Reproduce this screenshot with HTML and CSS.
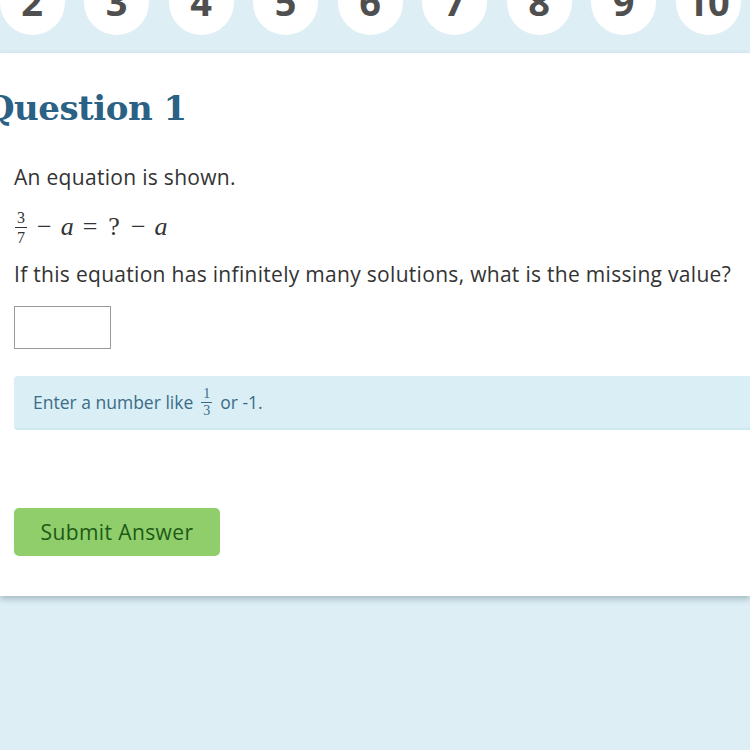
FILE: index.html
```html
<!DOCTYPE html>
<html>
<head>
<meta charset="utf-8">
<link rel="stylesheet" href="styles.css">
</head>
<body>
<nav class="nav">
  <div class="nav-row">
    <span class="dot">1</span>
    <span class="dot">2</span>
    <span class="dot">3</span>
    <span class="dot">4</span>
    <span class="dot">5</span>
    <span class="dot">6</span>
    <span class="dot">7</span>
    <span class="dot">8</span>
    <span class="dot">9</span>
    <span class="dot">10</span>
  </div>
</nav>
<main class="card">
  <h1 class="title">Question 1</h1>
  <p class="text first">An equation is shown.</p>
  <div class="eq">
    <span class="frac"><span class="num">3</span><span class="den">7</span></span>
    <span class="op">−</span><i class="var">a</i><span class="op">=</span><span class="q">?</span><span class="op">−</span><i class="var">a</i>
  </div>
  <p class="text">If this equation has infinitely many solutions, what is the missing value?</p>
  <div class="answer"></div>
  <div class="hint">Enter a number like <span class="frac small"><span class="num">1</span><span class="den">3</span></span> or -1.</div>
  <button class="submit">Submit Answer</button>
</main>
</body>
</html>
```

FILE: styles.css
```css
html, body {
  margin: 0;
  padding: 0;
}
body {
  background: #ddeef5;
  width: 750px;
  height: 750px;
  overflow: hidden;
  font-family: "Open Sans", "Liberation Sans", sans-serif;
}
.nav {
  height: 53px;
  overflow: hidden;
}
.nav-row {
  display: flex;
  gap: 19.5px;
  margin-left: -85px;
  margin-top: -30px;
}
.dot {
  flex: 0 0 65px;
  height: 65px;
  border-radius: 50%;
  background: #fff;
  display: flex;
  align-items: center;
  justify-content: center;
  color: #4f4f4f;
  font-weight: 700;
  font-size: 38px;
  font-family: "Open Sans", sans-serif;
  line-height: 1;
  padding-bottom: 4px;
  box-sizing: border-box;
}
.card {
  background: #fff;
  height: 543px;
  box-shadow: 0 3px 6px rgba(60, 90, 100, 0.35);
  padding: 0 0 0 14px;
  box-sizing: border-box;
  display: flex;
  flex-direction: column;
  align-items: flex-start;
  overflow: hidden;
}
.title {
  margin: 31px 0 0 -29px;
  font-family: "DejaVu Serif", serif;
  font-weight: 700;
  font-size: 34px;
  line-height: 48px;
  color: #2b6184;
  letter-spacing: -0.5px;
}
.text {
  margin: 0;
  font-size: 21px;
  letter-spacing: 0.3px;
  line-height: 28px;
  color: #333;
  white-space: nowrap;
}
.text.first {
  margin-top: 31px;
}
.eq {
  margin-top: 16px;
  height: 40px;
  display: flex;
  align-items: center;
  font-family: "Liberation Serif", serif;
  font-size: 26px;
  color: #333;
  margin-bottom: 13px;
}
.frac {
  display: inline-flex;
  flex-direction: column;
  align-items: center;
  font-family: "Liberation Serif", serif;
  font-size: 16px;
  line-height: 17px;
  padding: 0 1px;
}
.frac .num {
  border-bottom: 1px solid currentColor;
  padding: 0 2px 1px;
}
.frac .den {
  padding-top: 1px;
}
.op {
  margin: 0 9px;
}
.var {
  font-style: italic;
}
.q {
  margin: 0 2px;
}
.answer {
  margin-top: 18px;
  width: 97px;
  height: 43px;
  box-sizing: border-box;
  border: 1px solid #9a9a9a;
}
.hint {
  margin-top: 27px;
  align-self: stretch;
  margin-right: -10px;
  height: 54px;
  box-sizing: border-box;
  background: #daeef6;
  border-bottom: 2px solid #cfeaee;
  border-radius: 4px;
  padding: 0 0 0 19px;
  display: flex;
  align-items: center;
  gap: 4px;
  color: #3b6c86;
  font-size: 17.5px;
}
.frac.small {
  font-size: 14px;
  line-height: 14px;
  margin: 0 3px;
}
.submit {
  margin-top: 78px;
  width: 206px;
  height: 48px;
  border: none;
  border-radius: 5px;
  background: #8fce6b;
  color: #1d5a17;
  font-family: "Open Sans", "Liberation Sans", sans-serif;
  font-size: 21px;
  letter-spacing: 0.4px;
  padding: 0;
}
```
